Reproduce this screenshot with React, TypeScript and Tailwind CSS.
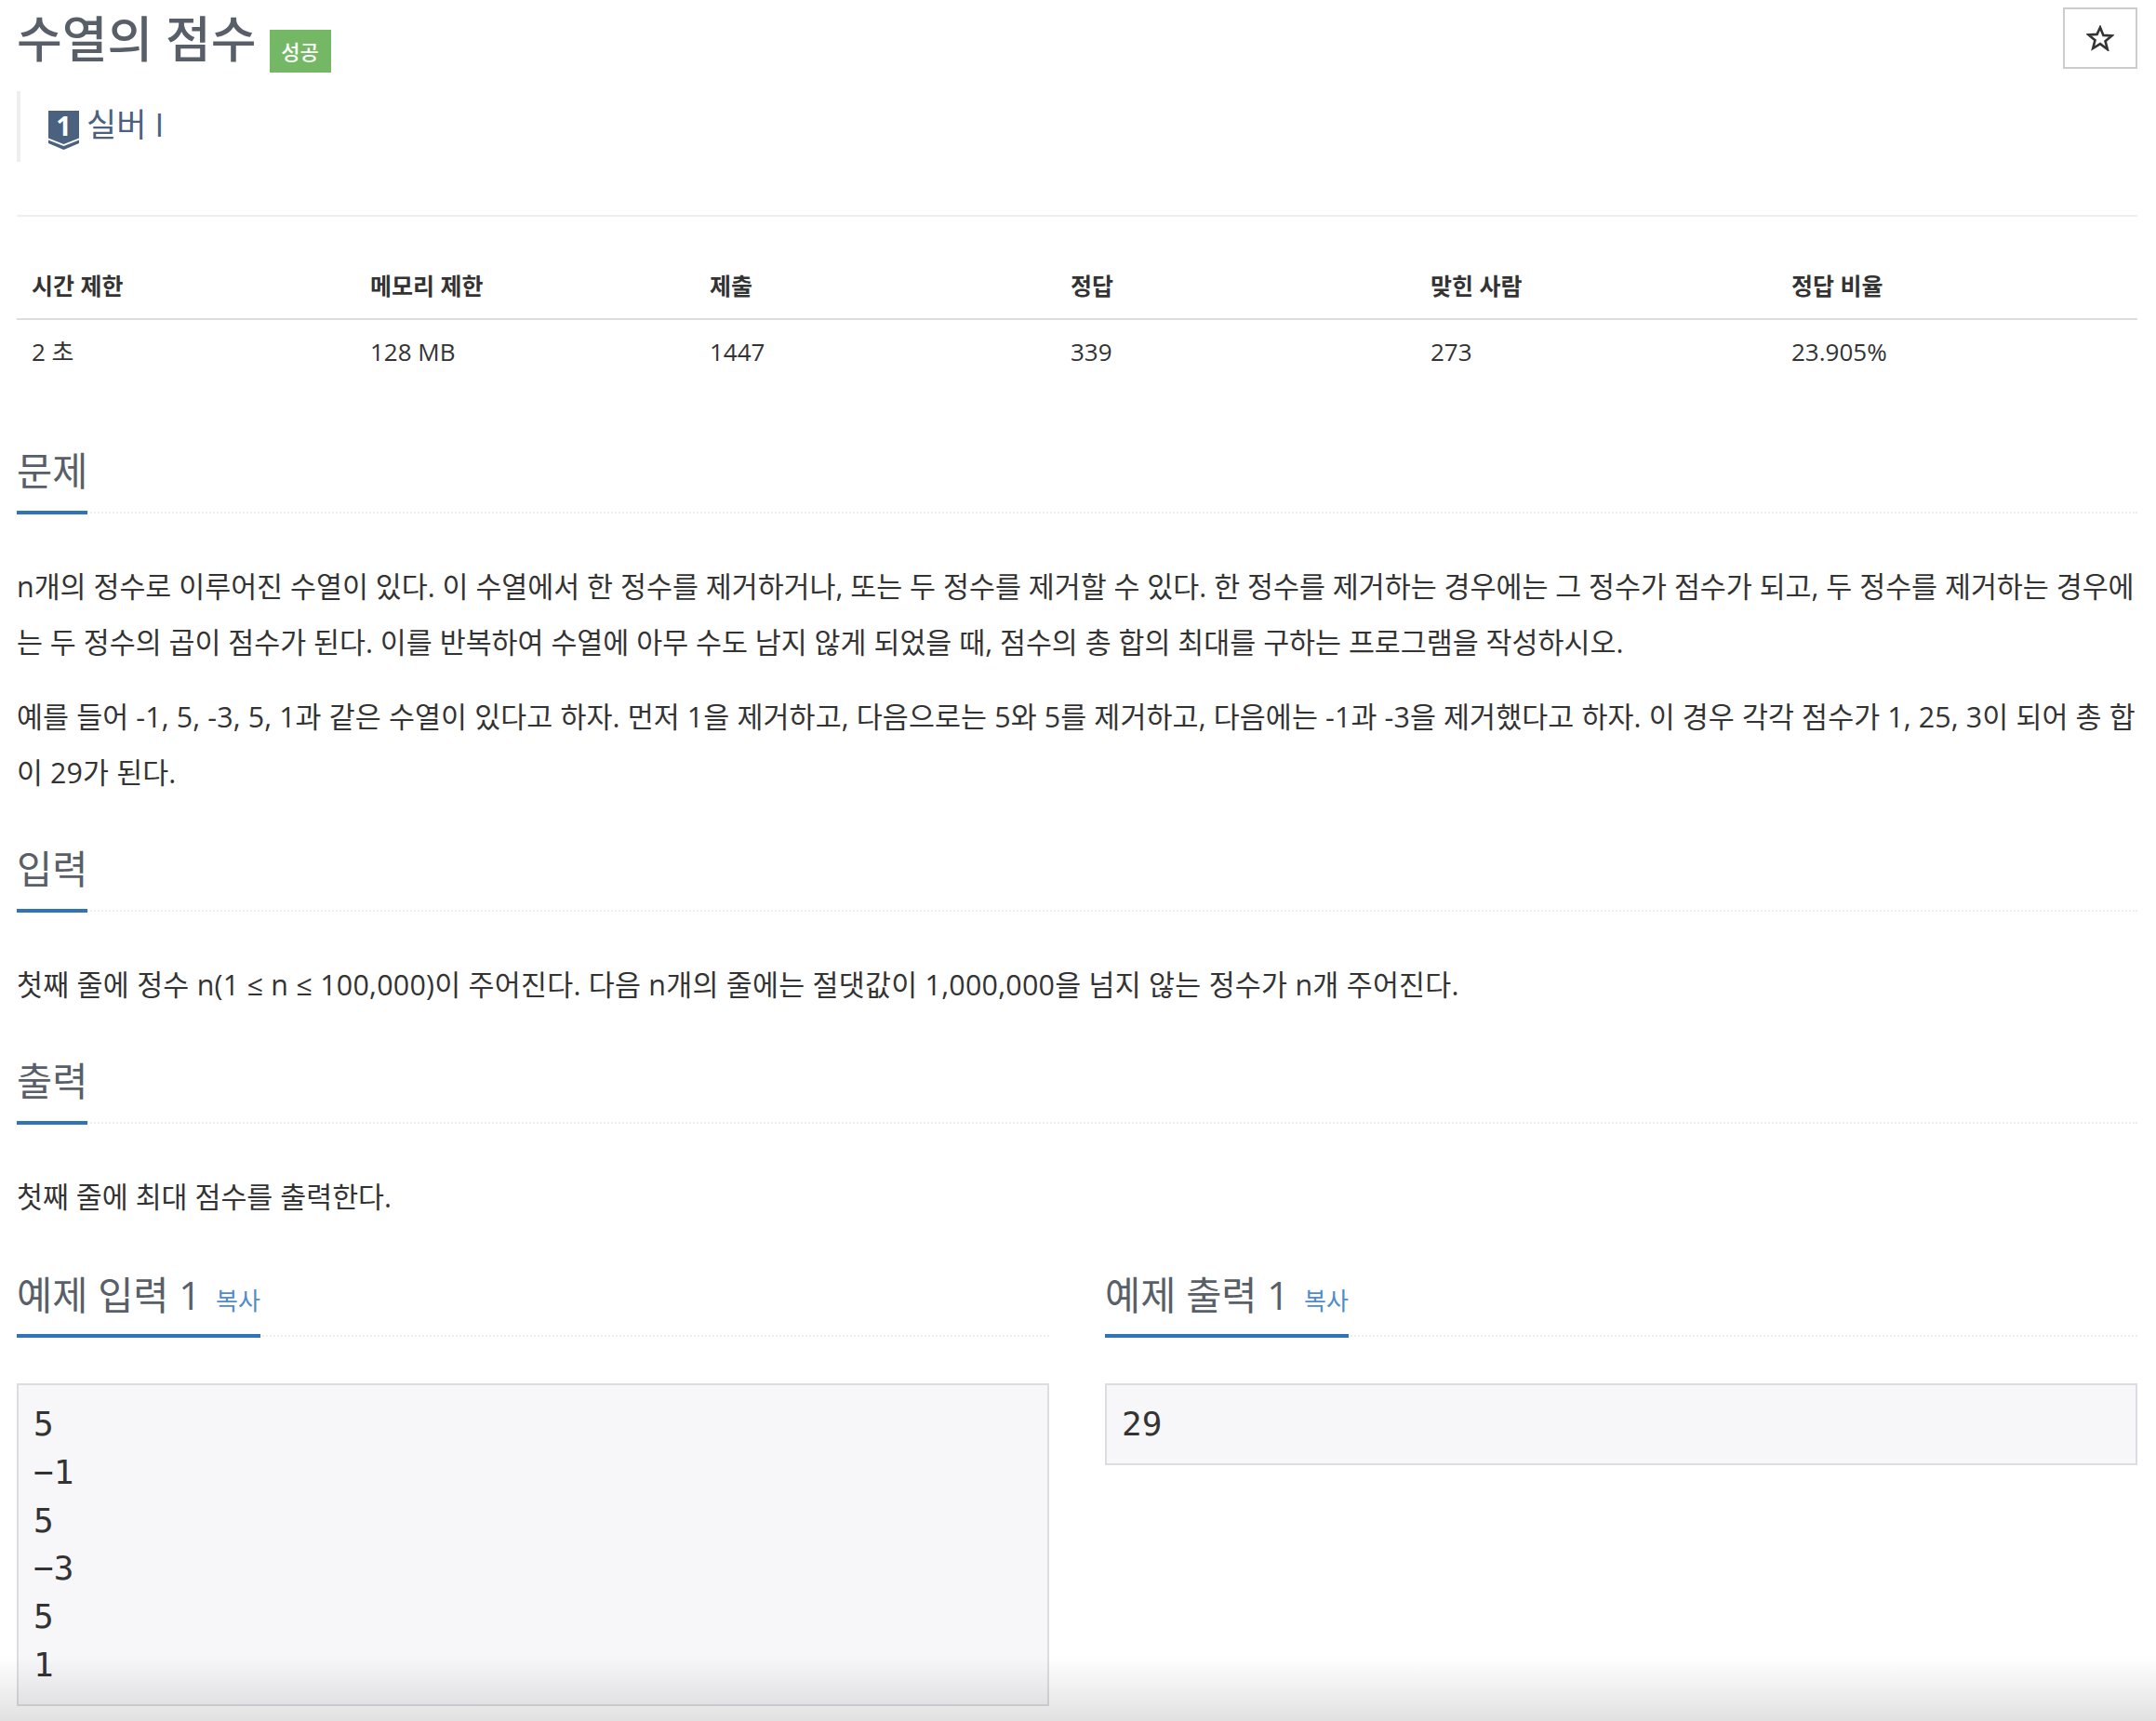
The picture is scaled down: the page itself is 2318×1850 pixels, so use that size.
import React from "react";

const FONT = "font-['Open_Sans','Noto_Sans_CJK_KR',sans-serif]";

function Heading({ children, copy, className = "" }: { children: React.ReactNode; copy?: boolean; className?: string }) {
  return (
    <div className={`flex items-end border-b-2 border-dotted border-[#eeeeee] ${className}`}>
      <div className={`-mb-[3px] border-b-4 border-[#3073b9] text-[41.5px] leading-[66px] text-[#585f69] whitespace-nowrap ${copy ? "pb-[3px]" : "pb-[10px]"}`}>
        {children}
        {copy && <a className="ml-[16px] text-[26px] text-[#4f8ccb]">복사</a>}
      </div>
    </div>
  );
}

function Para({ text, className = "" }: { text: string; className?: string }) {
  return <p className={`text-[30.4px] leading-[60px] text-[#333333] ${className}`}>{text}</p>;
}

const Sample = ({ title, lines }: { title: string; lines: string[] }) => (
  <section className="w-[1110px]">
    <Heading copy>{title}</Heading>
    <pre className="mt-[50px] border-2 border-[#dcdce3] bg-[#f7f7f9] px-[16px] py-[16px] font-['DejaVu_Sans_Mono',monospace] text-[36px] leading-[51.8px] text-[#333333]">
      {lines.join("\n")}
    </pre>
  </section>
);

export default function App() {
  const heads = ["시간 제한", "메모리 제한", "제출", "정답", "맞힌 사람", "정답 비율"];
  const vals = ["2 초", "128 MB", "1447", "339", "273", "23.905%"];
  return (
    <div className={`relative h-[1850px] w-[2318px] overflow-hidden bg-white pl-[18px] pr-[20px] ${FONT}`}>
      <header className="flex items-start justify-between">
        <div className="flex items-start pt-[9px]">
          <h1 className="text-[53px] leading-[66px] font-medium text-[#585f69]">수열의 점수</h1>
          <span className="ml-[14px] mt-[23px] flex h-[46px] w-[66px] items-center justify-center bg-[#74b866] text-[22px] font-medium text-white">
            성공
          </span>
        </div>
        <button className="mt-[8px] flex h-[66px] w-[80px] items-center justify-center border-2 border-[#cccccc] bg-white">
          <svg width="30" height="28" viewBox="0 0 30 28">
            <path d="M15 2.5l3.4 8.4 9.1.5-7 5.8 2.3 8.8L15 20.1l-7.8 4.9 2.3-8.8-7-5.8 9.1-.5z" fill="none" stroke="#333333" strokeWidth="2.6" />
          </svg>
        </button>
      </header>

      <div className="mt-[20px] flex h-[76px] items-start border-l-4 border-[#eeeeee] pl-[30px] pt-[21px]">
        <div className="relative h-[42px] w-[33px] shrink-0">
          <svg width="33" height="42" viewBox="0 0 33 42" className="block">
            <path d="M0 0h33v29.500L16.500 36 0 29.500z" fill="#4a6180" />
            <path d="M0 31.500l16.500 6.500 16.500-6.500v3.500L16.500 42 0 35z" fill="#4a6180" />
          </svg>
          <span className="absolute inset-x-0 top-[-2px] text-center text-[29px] leading-[36px] font-bold text-white">1</span>
        </div>
        <span className="ml-[8px] -mt-[10px] text-[35px] leading-[50px] text-[#4a6180]">실버 I</span>
      </div>

      <hr className="mt-[57px] border-t-2 border-[#eeeeee]" />

      <table className="mt-[44px] w-full table-fixed border-collapse text-[26px] text-[#333333]">
        <colgroup>
          <col className="w-[364px]" />
          <col className="w-[365px]" />
          <col className="w-[388px]" />
          <col className="w-[387px]" />
          <col className="w-[388px]" />
          <col />
        </colgroup>
        <thead>
          <tr className="border-b-2 border-[#dddddd]">
            {heads.map((h) => (
              <th key={h} className="h-[66px] px-[16px] pb-[4px] text-left text-[25px] font-bold">{h}</th>
            ))}
          </tr>
        </thead>
        <tbody>
          <tr>
            {vals.map((v) => (
              <td key={v} className="h-[70px] px-[16px]">{v}</td>
            ))}
          </tr>
        </tbody>
      </table>

      <Heading className="mt-[60px]">문제</Heading>
      <div className="mt-[49px]">
        <Para text="n개의 정수로 이루어진 수열이 있다. 이 수열에서 한 정수를 제거하거나, 또는 두 정수를 제거할 수 있다. 한 정수를 제거하는 경우에는 그 정수가 점수가 되고, 두 정수를 제거하는 경우에는 두 정수의 곱이 점수가 된다. 이를 반복하여 수열에 아무 수도 남지 않게 되었을 때, 점수의 총 합의 최대를 구하는 프로그램을 작성하시오." />
        <Para className="mt-[20px] tracking-[0.12px]" text="예를 들어 -1, 5, -3, 5, 1과 같은 수열이 있다고 하자. 먼저 1을 제거하고, 다음으로는 5와 5를 제거하고, 다음에는 -1과 -3을 제거했다고 하자. 이 경우 각각 점수가 1, 25, 3이 되어 총 합이 29가 된다." />
      </div>

      <Heading className="mt-[40px]">입력</Heading>
      <Para className="mt-[49px] tracking-[0.25px]" text="첫째 줄에 정수 n(1 ≤ n ≤ 100,000)이 주어진다. 다음 n개의 줄에는 절댓값이 1,000,000을 넘지 않는 정수가 n개 주어진다." />

      <Heading className="mt-[40px]">출력</Heading>
      <Para className="mt-[49px]" text="첫째 줄에 최대 점수를 출력한다." />

      <div className="mt-[42px] flex items-start justify-between">
        <Sample title="예제 입력 1" lines={["5", "−1", "5", "−3", "5", "1"]} />
        <Sample title="예제 출력 1" lines={["29"]} />
      </div>

      <div className="pointer-events-none absolute inset-x-0 bottom-0 h-[70px] bg-gradient-to-b from-transparent to-[#0000001e]" />
    </div>
  );
}
